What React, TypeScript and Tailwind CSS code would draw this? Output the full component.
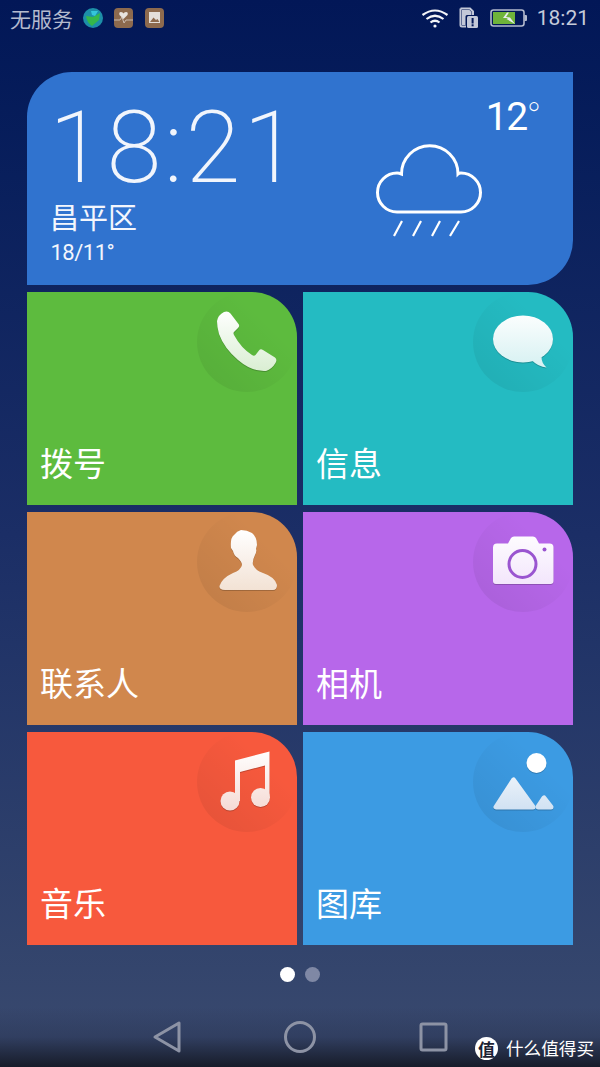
import { ReactNode } from 'react';

const cjk = "font-['Noto_Sans_CJK_SC','Noto_Sans',sans-serif]";

// Soft white-to-tint fill shared by the tile glyphs
const GlyphSvg = ({ id, tint, children }: { id: string; tint: string; children: ReactNode }) => (
  <svg viewBox="0 0 100 100" className="w-[100px] h-[100px] drop-shadow-[0_1.5px_0.5px_rgba(0,0,0,0.2)]">
    <defs>
      <linearGradient id={id} gradientUnits="userSpaceOnUse" x1="0" y1="18" x2="0" y2="80">
        <stop offset="0" stopColor="#ffffff" />
        <stop offset="1" stopColor={tint} />
      </linearGradient>
    </defs>
    <g fill={`url(#${id})`}>{children}</g>
  </svg>
);

const PhoneGlyph = () => (
  <GlyphSvg id="g-phone" tint="#d9eed2">
    <path d="M20 29 Q21 23 27 20 Q31 18.5 33.5 21.5 L41.5 32 Q43 34 41 36 L37 40 Q36 41 37 43 Q44 56 55 63 Q57 64.5 58.5 63 L62 58.5 Q63.5 56.5 66 58 L78 65.5 Q80.5 67.5 78.5 71 Q75 77 69 79 Q55 80 41 68 Q27 56 22 42 Q20 35 20 29Z" />
  </GlyphSvg>
);

const BubbleGlyph = () => (
  <GlyphSvg id="g-bubble" tint="#d3f0f1">
    <ellipse cx="50" cy="47" rx="30" ry="23.5" />
    <path d="M58.5 68 Q65.5 75 73.5 75.5 Q68.5 71 68.5 65Z" />
  </GlyphSvg>
);

const PersonGlyph = () => (
  <GlyphSvg id="g-person" tint="#f2e1d3">
    <path d="M44 18 Q50 18 55 21 Q60 25 60 33 L59 37 Q60 39 58 43 Q55 49 56 53 Q58 58 66 61 Q78 65 80 73 Q80 78 76 78 L28 78 Q22 78 22.5 74 Q25 66 36 61 Q44 58 45 53 Q45 50 41 46 Q37 44 36 39 L34 36 Q33 26 37 23 Q40 19 44 18Z" />
  </GlyphSvg>
);

const CameraGlyph = () => (
  <GlyphSvg id="g-camera" tint="#f1e2fb">
    <path d="M24 31.5 H35 L38 26 Q39 24.5 41 24.5 H60 Q62 24.5 63 26 L66 31.5 H76.5 Q80.5 31.5 80.5 35.5 V69 Q80.5 72 77.5 72 H23 Q20 72 20 69 V35.5 Q20 31.5 24 31.5Z" />
    <circle cx="49.5" cy="52" r="13.5" fill="none" stroke="#9a55d0" strokeWidth="3" />
    <circle cx="71.5" cy="37.5" r="2" fill="#9a55d0" />
  </GlyphSvg>
);

const MusicGlyph = () => (
  <GlyphSvg id="g-music" tint="#f5d9d3">
    <path d="M38 28.5 L72.5 19.5 V66 H68 V33.5 L43 40 V69 H38Z" />
    <circle cx="33" cy="69" r="9.5" />
    <circle cx="63.5" cy="65.5" r="9.5" />
  </GlyphSvg>
);

const GalleryGlyph = () => (
  <GlyphSvg id="g-gallery" tint="#cfe0f2">
    <circle cx="63.5" cy="31" r="10" fill="#ffffff" />
    <path d="M40.5 48 L23 75 H60Z" strokeWidth="5" strokeLinejoin="round" stroke="url(#g-gallery)" />
    <path d="M71 66 L65 75 H78Z" strokeWidth="5" strokeLinejoin="round" stroke="url(#g-gallery)" />
  </GlyphSvg>
);

const tiles = [
  { label: '拨号', bg: 'bg-[#5dbb3e]', glyph: <PhoneGlyph /> },
  { label: '信息', bg: 'bg-[#24bbc2]', glyph: <BubbleGlyph /> },
  { label: '联系人', bg: 'bg-[#d0874d]', glyph: <PersonGlyph /> },
  { label: '相机', bg: 'bg-[#b767ea]', glyph: <CameraGlyph /> },
  { label: '音乐', bg: 'bg-[#f7593d]', glyph: <MusicGlyph /> },
  { label: '图库', bg: 'bg-[#3c9be3]', glyph: <GalleryGlyph /> },
];

const Tile = ({ label, bg, glyph }: { label: string; bg: string; glyph: ReactNode }) => (
  <div className={`relative overflow-hidden h-[213px] rounded-tr-[45px] ${bg} flex items-end pl-[13px] pb-[21px]`}>
    <div className="absolute top-0 right-0 w-[100px] h-[100px] rounded-full bg-[linear-gradient(225deg,rgba(0,0,0,0)_30%,rgba(0,0,0,0.08)_100%)]">
      {glyph}
    </div>
    <span className={`${cjk} text-[33px] leading-[44px] text-white`}>{label}</span>
  </div>
);

const StatusIcons = () => (
  <div className="flex items-center gap-[11px] ml-[10px]">
    {/* globe */}
    <svg viewBox="0 0 20 20" className="w-[20px] h-[20px]">
      <circle cx="10" cy="10" r="10" fill="#1d8fa8" />
      <path d="M3 8 L10 9 L17 5 L16 12 L9 18 Q4 15 3 8Z" fill="#35b84a" />
      <path d="M8 3 L15 3 L12 8 L9 7Z" fill="#35c6d8" />
    </svg>
    {/* health */}
    <svg viewBox="0 0 20 20" className="w-[20px] h-[20px]">
      <rect width="19" height="20" rx="4" fill="#8d6a4e" />
      <path d="M9.5 11 L5.5 7 Q4.5 4 7 4 Q9 4 9.5 5.5 Q10 4 12 4 Q14.5 4 13.5 7Z" fill="#e8e4e0" />
      <path d="M0 12 H6 L8 9 L10 15 L12 12 H19" fill="none" stroke="#d9cfc6" strokeWidth="0.8" />
    </svg>
    {/* pictures */}
    <svg viewBox="0 0 20 20" className="w-[20px] h-[20px]">
      <rect width="19" height="20" rx="4" fill="#8d6a4e" />
      <rect x="4" y="4" width="11" height="11" fill="#e4dfda" />
      <path d="M5 14 L8.5 9.5 L11 12 L12.5 11 L14.5 14Z" fill="#8d6a4e" />
    </svg>
  </div>
);

const StatusBar = () => (
  <div className="h-[36px] flex items-center justify-between pl-[10px] pr-[11px] text-[#b4bace]">
    <div className="flex items-center">
      <span className={`${cjk} text-[21px] leading-[36px]`}>无服务</span>
      <StatusIcons />
    </div>
    <div className="flex items-center">
      {/* wifi */}
      <svg viewBox="0 0 28 20" className="w-[28px] h-[20px] mr-[10px]" fill="none" stroke="#f4f5f8" strokeWidth="2.2">
        <path d="M1.5 7 Q14 -2 26.5 7" />
        <path d="M5.5 11 Q14 4.5 22.5 11" />
        <path d="M9.5 14.5 Q14 11 18.5 14.5" />
        <circle cx="14" cy="18" r="1.6" fill="#f4f5f8" stroke="none" />
      </svg>
      {/* sim card with alert */}
      <svg viewBox="0 0 20 22" className="w-[20px] h-[22px] mr-[11px]">
        <path d="M1.5 1.5 H11 L14 4.5 V8 M7 19.5 H3 Q1.5 19.5 1.5 18 V1.5" fill="none" stroke="#c3c8d8" strokeWidth="2" />
        <path d="M3 3 H10.5 L12.5 5 V8 H8 Q6.5 8 6.5 9.5 V18 H3Z" fill="#c3c8d8" />
        <rect x="8" y="9" width="11" height="12" rx="1.5" fill="#c3c8d8" />
        <rect x="12.6" y="11" width="2" height="5.5" fill="#021757" />
        <rect x="12.6" y="17.3" width="2" height="2" fill="#021757" />
      </svg>
      {/* battery, charging */}
      <svg viewBox="0 0 38 18" className="w-[38px] h-[18px] mr-[9px]">
        <rect x="1" y="1" width="33" height="16" rx="2.5" fill="none" stroke="#b4bace" strokeWidth="1.6" />
        <rect x="3" y="3" width="22" height="12" fill="#6fb43a" />
        <path d="M34.5 6 H36 Q37 6 37 7 V11 Q37 12 36 12 H34.5Z" fill="#b4bace" />
        <path d="M17 3.5 L13 9 L18 9 L16.5 10 L25 15 L20 8.5 L16 8 L19 3.5Z" fill="#e8ecef" />
      </svg>
      <span className="font-['Roboto',sans-serif] text-[21px] leading-[36px] text-[#c6cbda]">18:21</span>
    </div>
  </div>
);

const Hero = () => (
  <div className="h-[213px] rounded-tl-[45px] rounded-br-[45px] bg-[#3073cf] flex justify-between text-white font-['Roboto',sans-serif]">
    <div className="flex flex-col pl-[24px] pt-[28px]">
      <div className="font-extralight text-[100px] leading-[96px] tracking-[2.5px] -ml-[2px] text-[#f1f5fc]">18:21</div>
      <div className={`${cjk} text-[29px] leading-[40px] -ml-[1px] text-[#f3f6fd]`}>昌平区</div>
      <div className="text-[22px] leading-[28px] mt-[3px] -ml-[0.5px] tracking-[-0.5px] text-[#f3f6fd]">18/11°</div>
    </div>
    <div className="flex flex-col items-end pr-[33px] pt-[22px]">
      <div className="font-normal text-[39px] leading-[46px] tracking-[-1.5px]">
        12<span className="font-thin">°</span>
      </div>
      <svg viewBox="0 0 108 94" className="w-[108px] h-[94px] mr-[56px] mt-[4px]" fill="none" stroke="#ffffff">
        <path
          d="M25.5 30 A28.25 28.25 0 0 1 82 30 Q83 29 85 29 A19.5 19.5 0 0 1 85 68 H21 A19.5 19.5 0 0 1 21 29 Q23 29 25.5 30Z"
          strokeWidth="3"
        />
        <path d="M18 92 L26 77 M37 92 L45 77 M56 92 L64 77 M74 92 L83 77" strokeWidth="2.2" />
      </svg>
    </div>
  </div>
);

const NavBar = () => (
  <div className="mt-auto h-[60px] flex items-center justify-center bg-gradient-to-b from-transparent via-[#2c3858]/60 to-[#171c2a]">
    <svg viewBox="0 0 300 34" className="w-[300px] h-[34px]" fill="none" stroke="#8d93a5" strokeWidth="3" strokeLinejoin="round">
      <path d="M29 3 V31 L5 17Z" />
      <circle cx="150" cy="17" r="14.5" />
      <rect x="271" y="4" width="25" height="26" rx="1.5" />
    </svg>
  </div>
);

export default function App() {
  return (
    <div className="relative w-[600px] h-[1067px] overflow-hidden flex flex-col bg-gradient-to-b from-[#021757] via-[#1b2e66] to-[#3a4a6e]">
      <StatusBar />
      <div className="px-[27px] pt-[36px] flex flex-col gap-[7px]">
        <Hero />
        <div className="grid grid-cols-2 gap-x-[6px] gap-y-[7px]">
          {tiles.map((tile) => (
            <Tile key={tile.label} {...tile} />
          ))}
        </div>
      </div>
      <div className="flex justify-center gap-[10px] mt-[22px]">
        <div className="w-[15px] h-[15px] rounded-full bg-white" />
        <div className="w-[15px] h-[15px] rounded-full bg-[#7f88a5]" />
      </div>
      <NavBar />
      <div className="absolute right-[6px] bottom-[7px] flex items-center gap-[8px]">
        <span className={`${cjk} w-[23px] h-[23px] rounded-full bg-white text-[#1c2233] text-[17px] leading-[23px] font-bold text-center`}>值</span>
        <span className={`${cjk} text-[17.6px] leading-[24px] text-white`}>什么值得买</span>
      </div>
    </div>
  );
}
